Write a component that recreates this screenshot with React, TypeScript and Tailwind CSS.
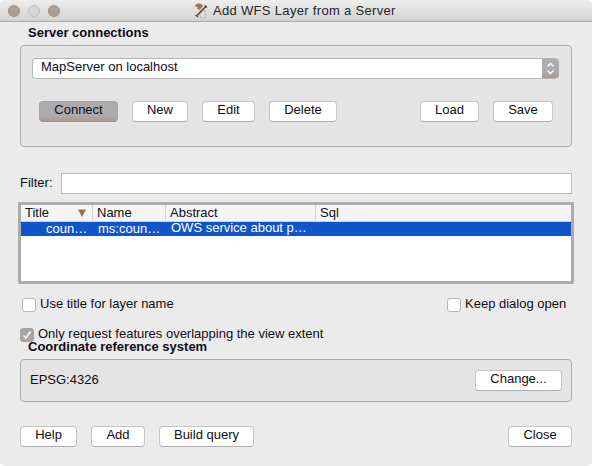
import type { ReactNode } from 'react';

function PushButton({ children, className }: { children: ReactNode; className: string }) {
  return (
    <button
      type="button"
      className={`h-[21px] shrink-0 whitespace-nowrap rounded-[4px] border border-[#c6c6c6] border-b-[#acadb0] bg-white pb-1 text-center leading-[15px] ${className}`}
    >
      {children}
    </button>
  );
}

function CheckBox({ checked }: { checked?: boolean }) {
  return (
    <span
      className={`flex size-[14px] shrink-0 items-center justify-center rounded-[3px] border ${
        checked ? 'border-[#a5a29f] bg-[#a8a6a4]' : 'border-[#b8b8b8] bg-white'
      }`}
    >
      {checked && (
        <svg width="10" height="10" viewBox="0 0 10 10" fill="none" stroke="#fff" strokeWidth="1.5">
          <path d="M1.5 5.5 4 8 8.5 1.5" />
        </svg>
      )}
    </span>
  );
}

function AppIcon() {
  return (
    <svg width="14" height="17" viewBox="0 0 14 17" className="shrink-0">
      <path d="M6 8.500 9 6l1.500 3 .5 3 1.500 1-1 2.500-3 .5-2.500-1z" fill="#dcdcd9" stroke="#b2b2ae" strokeWidth=".8" />
      <path d="M1 4.500Q1 2 4.500 1.500 8 1 9 4.500L7.500 5.500 6 7.500H3.500V5z" fill="#a5744a" />
      <path d="M12.300 4 3 13.500" stroke="#69431f" strokeWidth="1.600" />
      <path d="M10.500 3.500 13 5.500M1.500 13l2.500 2" stroke="#4b4038" strokeWidth="1.200" />
    </svg>
  );
}

export default function App() {
  return (
    <main className="flex h-[466px] w-[592px] flex-col overflow-hidden rounded-[5px] bg-[#ebebeb] font-['Liberation_Sans',Arial,sans-serif] text-[13px] leading-[15px] text-[#100d16]">
      <header className="flex h-[22px] shrink-0 items-center border-b border-[#acacad] bg-linear-to-b from-[#eeeeee] to-[#d2d2d0]">
        <div className="flex w-[194px] gap-2 pl-2">
          <span className="size-3 rounded-full border border-[#a88d75] bg-[#aaa19a]" />
          <span className="size-3 rounded-full border border-[#bdbdbd] bg-[#d6d6d5]" />
          <span className="size-3 rounded-full border border-[#a88d75] bg-[#aaa19a]" />
        </div>
        <AppIcon />
        <h1 className="ml-[5px] whitespace-nowrap tracking-[0.32px] text-[#28252a]">Add WFS Layer from a Server</h1>
      </header>

      <h2 className="mt-[3px] h-[20px] shrink-0 pl-7 font-bold">Server connections</h2>
      <section className="mx-5 h-[102px] shrink-0 rounded-[4px] border border-[#acacaf] bg-[#e4e4e4] pt-3 pl-[11px]">
        <div className="flex h-[21px] w-[527px] overflow-hidden rounded-[4px] border border-r-0 border-[#b5b5b8] bg-white">
          <span className="flex-1 pl-2">MapServer on localhost</span>
          <span className="-my-px flex w-[17px] items-center justify-center bg-linear-to-b from-[#acacaf] from-65% to-[#ab9584]">
            <svg width="9" height="13" viewBox="0 0 9 13" fill="none" stroke="#fff" strokeWidth="1.5">
              <path d="M1.500 4.500 4.500 1.500l3 3M1.500 8.500l3 3 3-3" />
            </svg>
          </span>
        </div>
        <div className="mt-[22px] ml-[7px] flex w-[514px] gap-[14px]">
          <button type="button" className="h-[21px] w-[79px] rounded-[4px] border border-[#a6a5a5] border-b-[#a98f7b] bg-linear-to-b from-[#acacaf] from-70% to-[#ab9a8d] pb-1 leading-[15px]">
            Connect
          </button>
          <PushButton className="w-[56px]">New</PushButton>
          <PushButton className="w-[53px]">Edit</PushButton>
          <PushButton className="w-[68px]">Delete</PushButton>
          <PushButton className="ml-auto w-[59px]">Load</PushButton>
          <PushButton className="w-[60px]">Save</PushButton>
        </div>
      </section>

      <label className="mx-5 mt-[26px] flex h-[21px] shrink-0 items-center">
        <span className="w-[41px] pb-[3px]">Filter:</span>
        <input className="h-[21px] min-w-0 flex-1 border border-[#b9b9bb] bg-white outline-none" />
      </label>

      <section className="mx-[18px] mt-2 h-[82px] shrink-0 rounded-[1px] border-[3px] border-[#acacaf] bg-white">
        <div className="flex h-[17px] items-center border-b border-[#cfcfcf] bg-[#f5f5f5]">
          <div className="flex h-full w-[72px] items-center justify-between border-r border-[#d6d6d6] pr-[6px] pb-px pl-1">
            Title
            <svg width="8" height="8" viewBox="0 0 8 8">
              <path d="M0 .5h8L4 8z" fill="#98714f" />
            </svg>
          </div>
          <div className="h-full w-[73px] border-r border-[#d6d6d6] pl-1">Name</div>
          <div className="h-full w-[150px] border-r border-[#d6d6d6] pl-1">Abstract</div>
          <div className="h-full pl-1">Sql</div>
        </div>
        <div className="flex h-[14px] overflow-hidden bg-[#1155ca] text-white">
          <div className="-mt-px w-[77px] pl-[25px]">coun…</div>
          <div className="-mt-px w-[73px]">ms:coun…</div>
          <div className="-mt-[2px]">OWS service about p…</div>
        </div>
      </section>

      <div className="mt-[14px] flex h-[14px] shrink-0 items-center pr-[26px] pl-[22px]">
        <CheckBox />
        <span className="ml-1 pb-[3px]">Use title for layer name</span>
        <span className="ml-auto"><CheckBox /></span>
        <span className="ml-1 w-[101px] whitespace-nowrap pb-[3px]">Keep dialog open</span>
      </div>
      <div className="mt-4 flex h-[14px] shrink-0 items-center pl-5">
        <CheckBox checked />
        <span className="ml-1 whitespace-nowrap pb-[3px]">Only request features overlapping the view extent</span>
      </div>

      <h2 className="-mt-[3px] h-[20px] shrink-0 pl-7 font-bold">Coordinate reference system</h2>
      <section className="mx-5 flex h-[43px] shrink-0 items-center justify-between rounded-[4px] border border-[#acacaf] bg-[#e4e4e4] pr-[9px] pl-[9px]">
        <span className="pb-[2px]">EPSG:4326</span>
        <PushButton className="w-[87px]">Change...</PushButton>
      </section>

      <footer className="mx-5 mt-6 flex shrink-0 gap-[14px]">
        <PushButton className="w-[57px]">Help</PushButton>
        <PushButton className="w-[54px]">Add</PushButton>
        <PushButton className="w-[95px]">Build query</PushButton>
        <PushButton className="ml-auto w-[64px]">Close</PushButton>
      </footer>
    </main>
  );
}
